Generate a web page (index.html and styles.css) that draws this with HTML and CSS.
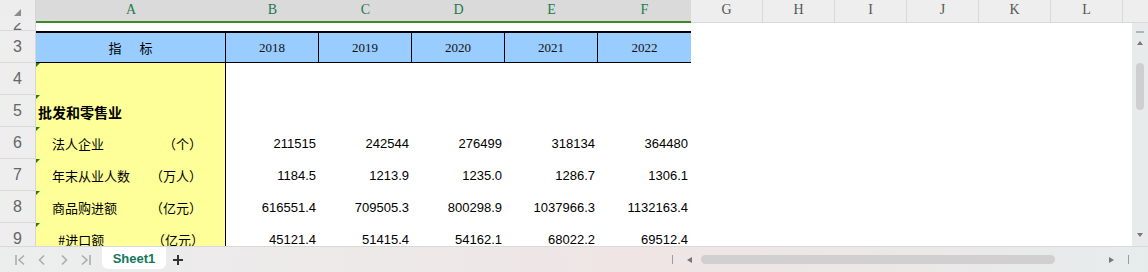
FILE: index.html
```html
<!DOCTYPE html>
<html lang="zh-CN">
<head>
    <meta charset="UTF-8">
    <meta name="viewport" content="width=device-width, initial-scale=1.0">
    <title>Sheet1</title>
    <link rel="stylesheet" href="styles.css">
</head>
<body>
    <div class="app">
        <div class="colhead">
            <div class="corner">
                <svg width="8" height="8" viewBox="0 0 8 8"><polygon points="7,0 7,7 0,7" fill="#8c8c8c"/></svg>
            </div>
            <div class="ch sel col-a">A</div>
            <div class="ch sel col-n">B</div>
            <div class="ch sel col-n">C</div>
            <div class="ch sel col-n">D</div>
            <div class="ch sel col-n">E</div>
            <div class="ch sel col-n">F</div>
            <div class="ch col-e">G</div>
            <div class="ch col-e">H</div>
            <div class="ch col-e">I</div>
            <div class="ch col-e">J</div>
            <div class="ch col-e">K</div>
            <div class="ch col-e">L</div>
            <div class="ch col-rest"></div>
        </div>

        <div class="body">
            <div class="grid">
                <div class="row r2">
                    <div class="rh"><span>2</span></div>
                </div>
                <div class="row head">
                    <div class="rh">3</div>
                    <div class="cell col-a title"><span>指</span><span>标</span></div>
                    <div class="cell col-n year">2018</div>
                    <div class="cell col-n year">2019</div>
                    <div class="cell col-n year">2020</div>
                    <div class="cell col-n year">2021</div>
                    <div class="cell col-n year last">2022</div>
                </div>
                <div class="row">
                    <div class="rh">4</div>
                    <div class="cell col-a label"></div>
                </div>
                <div class="row">
                    <div class="rh">5</div>
                    <div class="cell col-a label group">批发和零售业</div>
                </div>
                <div class="row">
                    <div class="rh">6</div>
                    <div class="cell col-a label item"><span>法人企业</span><span>（个）</span></div>
                    <div class="cell col-n num">211515</div>
                    <div class="cell col-n num">242544</div>
                    <div class="cell col-n num">276499</div>
                    <div class="cell col-n num">318134</div>
                    <div class="cell col-n num">364480</div>
                </div>
                <div class="row">
                    <div class="rh">7</div>
                    <div class="cell col-a label item"><span>年末从业人数</span><span>（万人）</span></div>
                    <div class="cell col-n num">1184.5</div>
                    <div class="cell col-n num">1213.9</div>
                    <div class="cell col-n num">1235.0</div>
                    <div class="cell col-n num">1286.7</div>
                    <div class="cell col-n num">1306.1</div>
                </div>
                <div class="row">
                    <div class="rh">8</div>
                    <div class="cell col-a label item"><span>商品购进额</span><span>（亿元）</span></div>
                    <div class="cell col-n num">616551.4</div>
                    <div class="cell col-n num">709505.3</div>
                    <div class="cell col-n num">800298.9</div>
                    <div class="cell col-n num">1037966.3</div>
                    <div class="cell col-n num">1132163.4</div>
                </div>
                <div class="row">
                    <div class="rh">9</div>
                    <div class="cell col-a label item sub"><span>#进口额</span><span>（亿元）</span></div>
                    <div class="cell col-n num">45121.4</div>
                    <div class="cell col-n num">51415.4</div>
                    <div class="cell col-n num">54162.1</div>
                    <div class="cell col-n num">68022.2</div>
                    <div class="cell col-n num">69512.4</div>
                </div>
            </div>
            <div class="vscroll">
                <div class="vdash"></div>
                <div class="tri up"></div>
                <div class="vthumb"></div>
                <div class="tri down"></div>
            </div>
        </div>

        <div class="tabbar">
            <div class="nav">
                <button class="navbtn"><svg width="12" height="12" viewBox="0 0 12 12"><path d="M2 1v10M10 1.5L5 6l5 4.5"/></svg></button>
                <button class="navbtn"><svg width="12" height="12" viewBox="0 0 12 12"><path d="M8 1.5L3.5 6 8 10.5"/></svg></button>
                <button class="navbtn"><svg width="12" height="12" viewBox="0 0 12 12"><path d="M4 1.5L8.5 6 4 10.5"/></svg></button>
                <button class="navbtn"><svg width="12" height="12" viewBox="0 0 12 12"><path d="M2 1.5L7 6l-5 4.5M10 1v10"/></svg></button>
            </div>
            <div class="tab">Sheet1</div>
            <div class="add"><svg width="10" height="10" viewBox="0 0 10 10"><path d="M5 0v10M0 5h10"/></svg></div>
            <div class="hscroll">
                <div class="pipe"></div>
                <div class="tri left"></div>
                <div class="hthumb"></div>
                <div class="tri right"></div>
                <div class="pipe end"></div>
            </div>
        </div>
    </div>
</body>
</html>
```

FILE: styles.css
```css
* {
    box-sizing: border-box;
}

body {
    margin: 0;
    background: #fff;
    font-family: 'Liberation Sans', Arial, sans-serif;
}

.app {
    width: 1148px;
    height: 272px;
    display: flex;
    flex-direction: column;
    overflow: hidden;
}

/* column header */
.colhead {
    display: flex;
    height: 23px;
    flex: none;
}

.corner {
    width: 36px;
    flex: none;
    background: #ededed;
    border-right: 1px solid #d6d6d6;
    display: flex;
    justify-content: center;
    padding: 9px 0 0 0;
}

.ch {
    flex: none;
    display: flex;
    align-items: center;
    justify-content: center;
    padding-bottom: 2px;
    font-family: 'Liberation Serif', 'Times New Roman', serif;
    font-size: 14px;
    color: #555;
    background: #eeeeee;
    border-bottom: 1px solid #d9d9d9;
    height: 23px;
}

.ch.sel {
    background: #dadada;
    color: #1f7a4d;
    border-bottom: 2px solid #3b8a27;
}

.ch.col-e {
    border-right: 1px solid #d9d9d9;
}

.ch.col-rest {
    flex: 1;
}

.col-a {
    width: 190px;
    flex: none;
}

.col-n {
    width: 93px;
    flex: none;
}

.col-e {
    width: 72px;
}

/* sheet body */
.body {
    flex: 1;
    display: flex;
    min-height: 0;
}

.grid {
    flex: 1;
    overflow: hidden;
}

.row {
    display: flex;
    height: 32px;
}

.row.r2 {
    height: 8px;
}

.rh {
    width: 36px;
    flex: none;
    display: flex;
    align-items: center;
    justify-content: center;
    background: #eeeeee;
    border-right: 1px solid #d6d6d6;
    border-bottom: 1px solid #d9d9d9;
    font-size: 16px;
    color: #666;
    overflow: hidden;
}

.r2 .rh {
    align-items: flex-start;
}

.r2 .rh span {
    display: block;
    line-height: 16px;
    margin-top: -6px;
}

.cell {
    height: 32px;
    position: relative;
}

/* row 3: the header band */
.head .cell {
    background: #99ccff;
    border-top: 2px solid #000;
    border-bottom: 1px solid #000;
    border-right: 1px solid #000;
    display: flex;
    align-items: center;
    justify-content: center;
}

.head .cell.last {
    border-right: none;
}

.title {
    gap: 18px;
    font-family: 'Noto Sans CJK SC', sans-serif;
    font-size: 13px;
    color: #000;
}

.year {
    font-family: 'Liberation Serif', 'Times New Roman', serif;
    font-size: 13px;
    color: #111;
    padding-top: 1px;
}

/* column A labels */
.label {
    background: #ffff99;
    border-right: 1px solid #000;
    display: flex;
    align-items: center;
    font-family: 'Noto Sans CJK SC', sans-serif;
    font-size: 13px;
    color: #000;
}

.label::before {
    content: '';
    position: absolute;
    left: 0;
    top: 0;
    border-top: 4px solid #1e7b22;
    border-right: 4px solid transparent;
}

.group {
    font-size: 14px;
    font-weight: bold;
    padding: 1px 0 0 2px;
}

.item {
    justify-content: space-between;
    padding: 0 23px 0 16px;
}

.item.sub {
    padding: 0 21px 0 22px;
}

.num {
    display: flex;
    align-items: center;
    justify-content: flex-end;
    padding-right: 3px;
    font-size: 13px;
    color: #000;
}

/* vertical scrollbar */
.vscroll {
    width: 16px;
    flex: none;
    background: #e7ebeb;
    display: flex;
    flex-direction: column;
    align-items: center;
    padding-top: 8px;
}

.vdash {
    width: 8px;
    height: 2px;
    background: #b4b4b4;
}

.vthumb {
    width: 8px;
    height: 47px;
    border-radius: 4px;
    background: #cfcfcf;
    margin-top: 18px;
}

.tri {
    width: 0;
    height: 0;
}

.tri.up {
    margin-top: 8px;
    border-left: 3px solid transparent;
    border-right: 3px solid transparent;
    border-bottom: 4px solid #777;
}

.tri.down {
    margin-top: auto;
    margin-bottom: 9px;
    border-left: 3px solid transparent;
    border-right: 3px solid transparent;
    border-top: 4px solid #777;
}

/* sheet tabs */
.tabbar {
    height: 26px;
    flex: none;
    display: flex;
    align-items: center;
    border-top: 1px solid #d9d9d9;
    background: linear-gradient(90deg, #eceeee 0%, #ede9e9 30%, #efe5e5 55%, #ede7e7 75%, #e6ecec 100%);
}

.nav {
    display: flex;
    padding-left: 9px;
}

.navbtn {
    width: 22px;
    height: 22px;
    padding: 0;
    border: none;
    background: none;
    display: flex;
    align-items: center;
    justify-content: center;
}

.navbtn path {
    fill: none;
    stroke: #acacac;
    stroke-width: 1.6;
}

.tab {
    align-self: flex-start;
    margin-left: 5px;
    width: 64px;
    height: 22px;
    background: #fff;
    border-radius: 0 0 6px 6px;
    display: flex;
    align-items: center;
    justify-content: center;
    font-size: 13px;
    font-weight: bold;
    color: #14775a;
}

.add {
    margin-left: 7px;
    display: flex;
}

.add path {
    stroke: #333;
    stroke-width: 2;
}

.hscroll {
    margin-left: auto;
    display: flex;
    align-items: center;
    padding-right: 19px;
}

.pipe {
    width: 1px;
    height: 9px;
    background: #9c9c9c;
}

.pipe.end {
    margin-left: 14px;
}

.tri.left {
    margin-left: 14px;
    border-top: 3px solid transparent;
    border-bottom: 3px solid transparent;
    border-right: 5px solid #777;
}

.hthumb {
    margin-left: 9px;
    width: 354px;
    height: 9px;
    border-radius: 5px;
    background: #d1cfcf;
}

.tri.right {
    margin-left: 54px;
    border-top: 3px solid transparent;
    border-bottom: 3px solid transparent;
    border-left: 5px solid #777;
}
```
